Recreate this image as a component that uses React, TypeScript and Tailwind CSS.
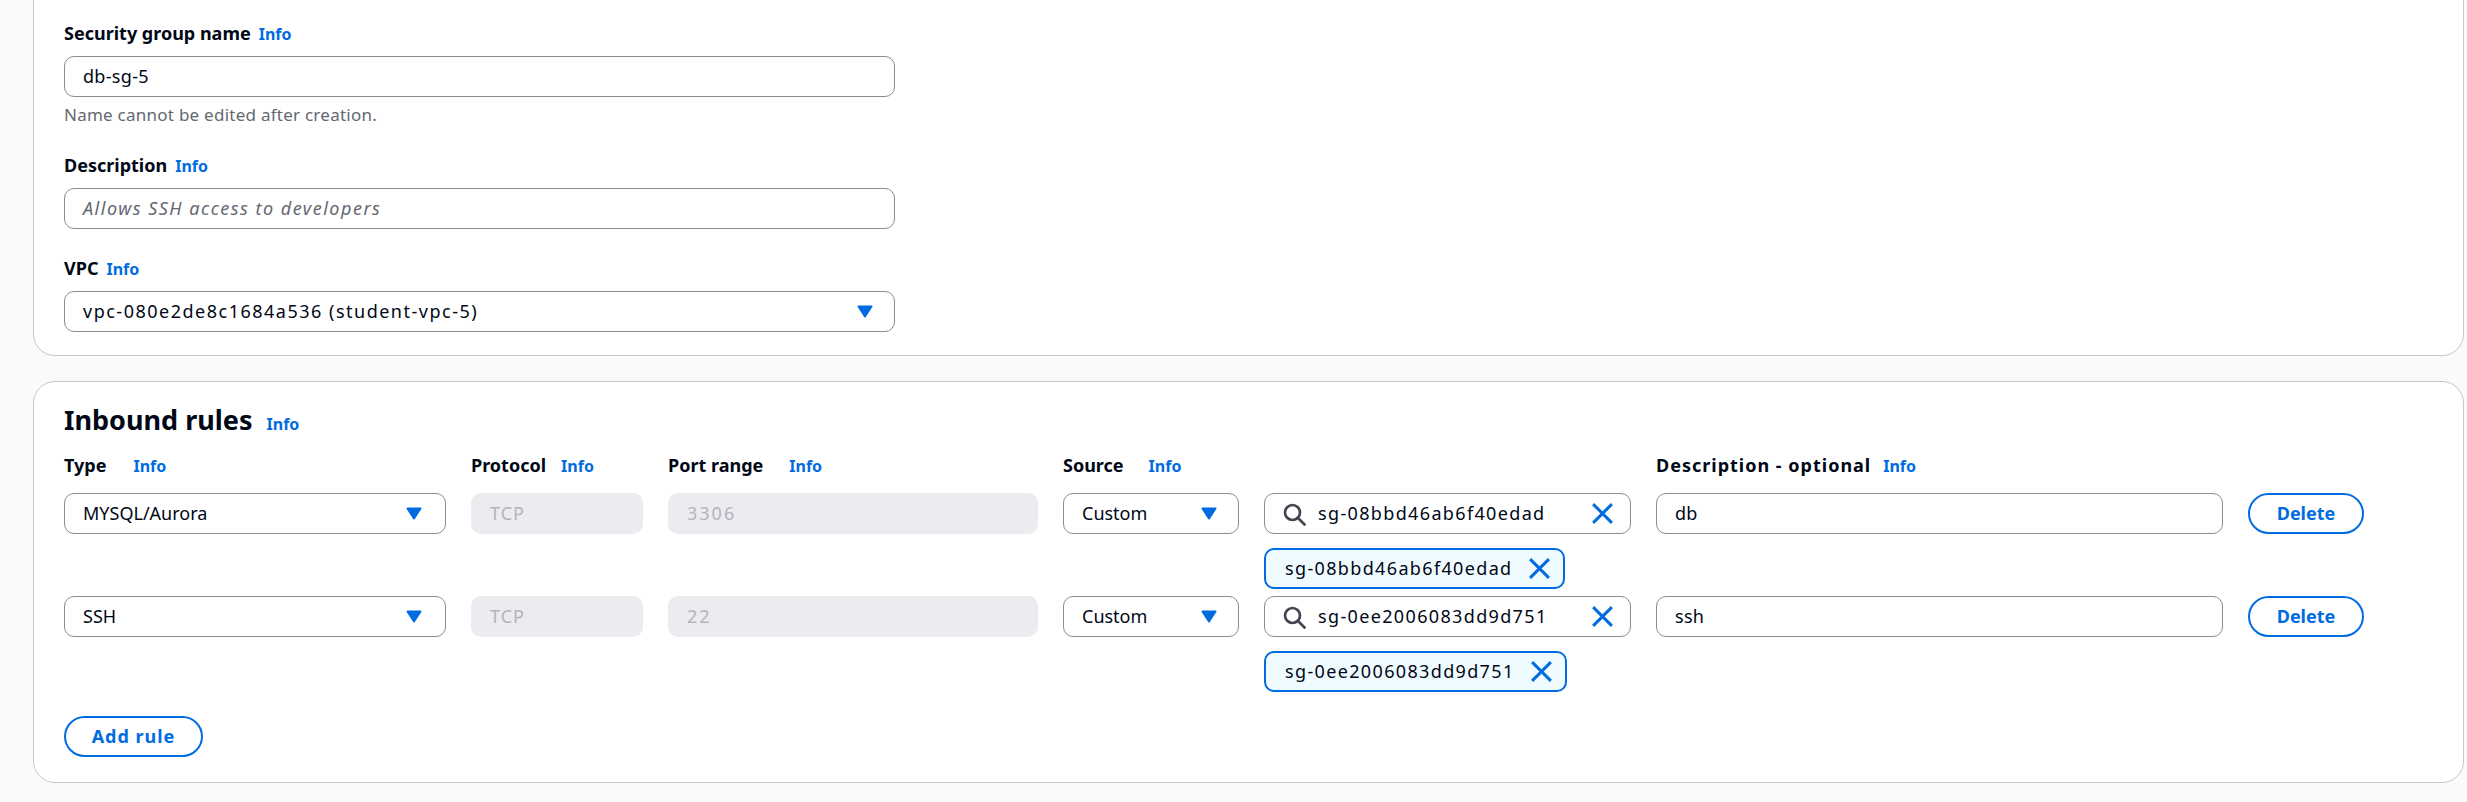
import React from 'react'

const FONT = "font-['Noto_Sans',_'Open_Sans',_sans-serif]"

function Caret() {
  return (
    <svg width="16" height="13" viewBox="0 0 16 13" className="shrink-0 text-[#006ce0]">
      <path d="M1.5 1.5H14.5L8 11.5Z" fill="currentColor" stroke="currentColor" strokeWidth="2" strokeLinejoin="round" />
    </svg>
  )
}

function SearchIcon() {
  return (
    <svg width="24" height="24" viewBox="0 0 16 16" fill="none" className="shrink-0 text-[#424650]">
      <circle cx="7" cy="7" r="5" stroke="currentColor" strokeWidth="1.8" />
      <path d="M15 15l-4.5-4.5" stroke="currentColor" strokeWidth="1.8" strokeLinecap="round" />
    </svg>
  )
}

function CloseIcon({ className = '' }: { className?: string }) {
  return (
    <svg width="25" height="25" viewBox="0 0 16 16" fill="none" className={`shrink-0 text-[#006ce0] ${className}`}>
      <path d="M2 2l12 12M14 2L2 14" stroke="currentColor" strokeWidth="1.9" />
    </svg>
  )
}

function Info({ className = 'ml-[8px]' }: { className?: string }) {
  return <span className={`${className} text-[16px] font-bold tracking-normal text-[#006ce0]`}>Info</span>
}

function Label({ children, info = 'ml-[8px]', className = '' }: { children: React.ReactNode; info?: string; className?: string }) {
  return (
    <div className={`flex items-baseline text-[18px] font-bold leading-[24px] whitespace-nowrap ${className}`}>
      {children}
      <Info className={info} />
    </div>
  )
}

function TextBox({ value, placeholder, className = '' }: { value?: string; placeholder?: string; className?: string }) {
  return (
    <div
      className={`flex h-[41px] items-center rounded-[10px] border border-[#8c8c94] bg-white pl-[18px] text-[18px] ${className}`}
    >
      {value ? (
        <span className="tracking-[0.3px]">{value}</span>
      ) : (
        <span className="italic tracking-[1.5px] text-[#656871]">{placeholder}</span>
      )}
    </div>
  )
}

function Select({ value, className = '', wide = false }: { value: string; className?: string; wide?: boolean }) {
  return (
    <div
      className={`flex h-[41px] items-center justify-between rounded-[10px] border border-[#8c8c94] bg-white pl-[18px] pr-[21px] text-[18px] ${className}`}
    >
      <span className={wide ? 'whitespace-nowrap tracking-[1.5px]' : 'whitespace-nowrap'}>{value}</span>
      <Caret />
    </div>
  )
}

function Disabled({ value, className = '' }: { value: string; className?: string }) {
  return (
    <div className={`flex h-[41px] items-center rounded-[10px] bg-[#ebebf0] pl-[19px] text-[18px] text-[#b4b4bb] ${className}`}>
      {value}
    </div>
  )
}

function SearchBox({ value }: { value: string }) {
  return (
    <div className="flex h-[41px] items-center rounded-[10px] border border-[#8c8c94] bg-white pl-[17px] pr-[15px] text-[18px]">
      <SearchIcon />
      <span className="ml-[12px] flex-1 whitespace-nowrap tracking-[1.35px]">{value}</span>
      <CloseIcon />
    </div>
  )
}

function Token({ value }: { value: string }) {
  return (
    <div className="flex h-[41px] w-fit items-center rounded-[10px] border-2 border-[#006ce0] bg-[#f0fbff] pl-[19px] pr-[11px] text-[18px]">
      <span className="whitespace-nowrap tracking-[1.35px]">{value}</span>
      <CloseIcon className="ml-[14px]" />
    </div>
  )
}

function OutlineButton({ children, className = '' }: { children: React.ReactNode; className?: string }) {
  return (
    <div
      className={`flex h-[41px] items-center justify-center rounded-full border-[2.5px] border-[#006ce0] text-[18px] font-bold text-[#006ce0] ${className}`}
    >
      {children}
    </div>
  )
}

const GRID = 'grid grid-cols-[382px_172px_370px_176px_367px_567px_116px] gap-x-[25px]'

const RULES = [
  { type: 'MYSQL/Aurora', port: '3306', sg: 'sg-08bbd46ab6f40edad', desc: 'db' },
  { type: 'SSH', port: '22', sg: 'sg-0ee2006083dd9d751', desc: 'ssh' },
]

export default function App() {
  return (
    <div className={`${FONT} min-h-screen overflow-hidden bg-[#fafafa] pl-[33px] pr-[3px] text-[#000716]`}>
      <div className="-mt-[55px] rounded-[22px] border border-[#c6c6cd] bg-white px-[30px] pt-[20px] pb-[23px]">
        <h2 className="text-[28px] font-bold leading-[36px]">Basic details</h2>

        <div className="mt-[19px] w-[831px]">
          <Label>Security group name</Label>
          <TextBox value="db-sg-5" className="mt-[10px]" />
          <p className="mt-[8px] text-[17px] leading-[20px] tracking-[0.25px] text-[#656871]">
            Name cannot be edited after creation.
          </p>

          <Label className="mt-[28px]">Description</Label>
          <TextBox placeholder="Allows SSH access to developers" className="mt-[10px]" />

          <Label className="mt-[27px]">VPC</Label>
          <Select value="vpc-080e2de8c1684a536 (student-vpc-5)" wide className="mt-[10px]" />
        </div>
      </div>

      <div className="mt-[25px] rounded-[22px] border border-[#c6c6cd] bg-white px-[30px] pt-[20px] pb-[25px]">
        <div className="flex items-baseline">
          <h2 className="text-[27px] font-bold leading-[36px]">Inbound rules</h2>
          <Info className="ml-[14px]" />
        </div>

        <div className={`${GRID} mt-[15px]`}>
          <Label info="ml-[27px]">Type</Label>
          <Label info="ml-[15px]">Protocol</Label>
          <Label info="ml-[26px]">Port range</Label>
          <Label info="ml-[25px]">Source</Label>
          <div />
          <Label info="ml-[12px]" className="tracking-[1px]">Description - optional</Label>
          <div />
        </div>

        <div className="mt-[15px] flex flex-col gap-y-[7px]">
          {RULES.map(rule => (
            <div key={rule.sg} className={`${GRID} gap-y-[14px]`}>
              <Select value={rule.type} className="pr-[23px]" />
              <Disabled value="TCP" className="tracking-[1px]" />
              <Disabled value={rule.port} className="tracking-[2px]" />
              <Select value="Custom" />
              <SearchBox value={rule.sg} />
              <TextBox value={rule.desc} />
              <OutlineButton>Delete</OutlineButton>
              <div className="col-start-5">
                <Token value={rule.sg} />
              </div>
            </div>
          ))}
        </div>

        <OutlineButton className="mt-[24px] w-[139px] tracking-[1px]">Add rule</OutlineButton>
      </div>
    </div>
  )
}
